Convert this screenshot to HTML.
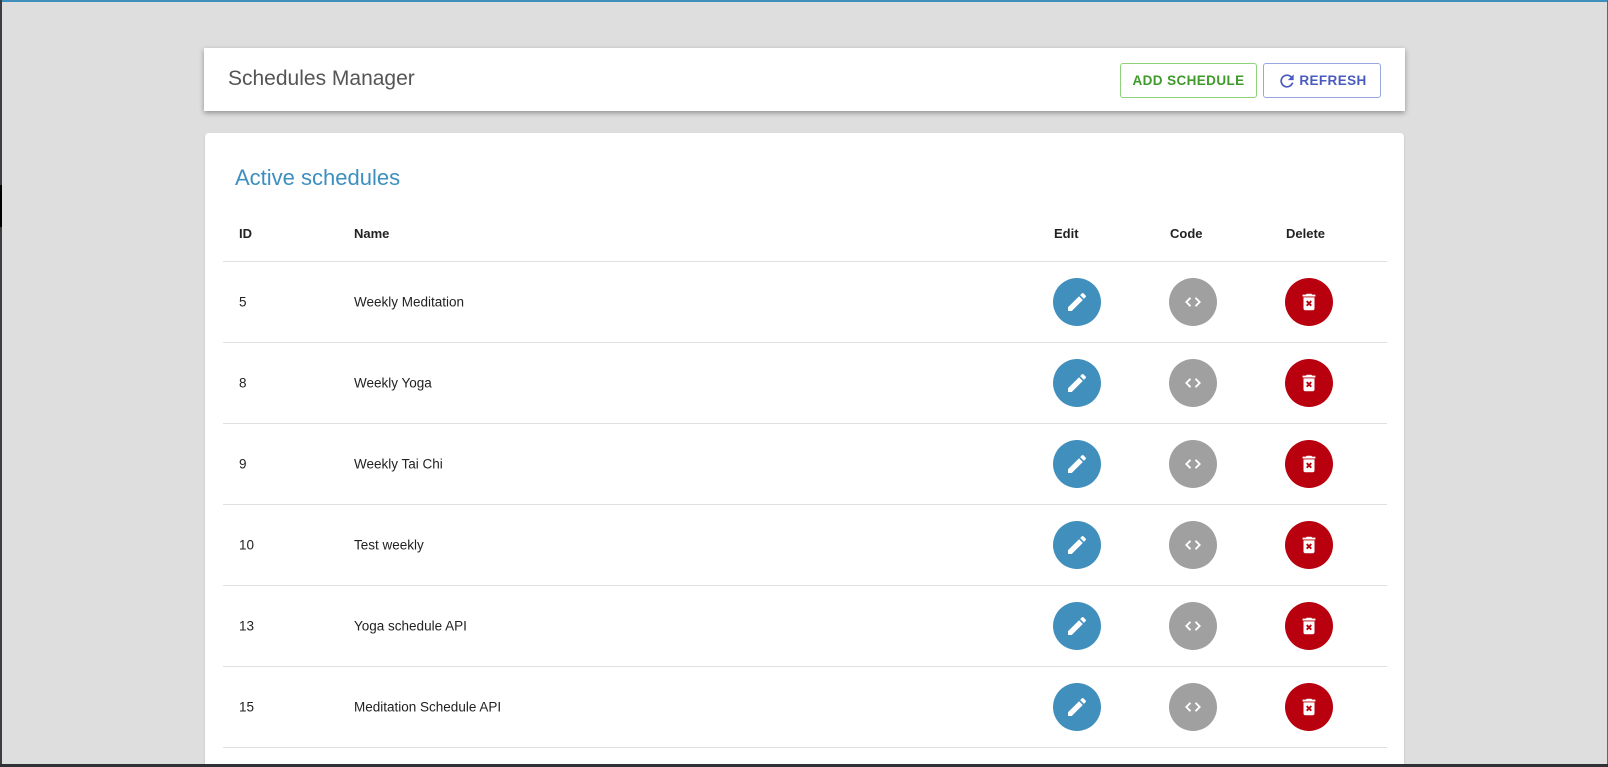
<!DOCTYPE html>
<html><head><meta charset="utf-8"><style>
*{box-sizing:border-box;margin:0;padding:0}
html,body{width:1608px;height:767px;overflow:hidden}
body{background:#dedede;font-family:"Liberation Sans",sans-serif;position:relative;color:#222}
.tb{position:absolute;left:0;top:0;width:1608px;height:2px;background:#3f8fbd}
.lb{position:absolute;left:0;top:0;width:2px;height:767px;background:#3a3d42}
.lb2{position:absolute;left:0;top:185px;width:2px;height:42px;background:#000}
.bb{position:absolute;left:0;top:764px;width:1608px;height:3px;background:#2e3236}
.rb{position:absolute;right:0;top:0;width:1px;height:767px;background:#666}
.hdr{position:absolute;left:204px;top:48px;width:1201px;height:63px;background:#fff;box-shadow:0 2px 5px rgba(0,0,0,.35)}
.hdr h1{position:absolute;left:24px;top:19px;font-size:21px;font-weight:normal;color:#555}
.btn{position:absolute;top:15px;height:35px;border:1px solid;border-radius:3px;font-size:13.5px;font-weight:bold;letter-spacing:.4px;display:flex;align-items:center;justify-content:center;background:#fff}
.add{left:916px;width:137px;border-color:#8fd27a;color:#3f9a2b}
.ref{left:1059px;width:118px;border-color:#9aa6e0;color:#4a5bbf;gap:2px}
.card{position:absolute;left:205px;top:133px;width:1199px;height:640px;background:#fff;border-radius:4px;box-shadow:0 1px 2px rgba(0,0,0,.15)}
.card h2{position:absolute;left:30px;top:32px;font-size:22px;font-weight:normal;color:#3d8fc0}
.t{position:absolute;left:18px;width:1164px}
.th{top:88px;height:41px;border-bottom:1px solid #e0e0e0;font-size:13px;font-weight:bold}
.th span{position:absolute;top:5px}
.row{height:81px;border-bottom:1px solid #e0e0e0;font-size:13.5px;position:relative}
.c{position:absolute;top:50%;transform:translateY(-50%)}
.circ{position:absolute;top:50%;margin-top:-24px;width:48px;height:48px;border-radius:50%;display:flex;align-items:center;justify-content:center}
.e{left:830px;background:#418fbd}.k{left:946px;background:#a0a0a0}.d{left:1062px;background:#b8000e}
</style></head><body>
<div class="tb"></div><div class="lb"></div><div class="lb2"></div><div class="rb"></div>
<div class="hdr"><h1>Schedules Manager</h1>
<div class="btn add">ADD SCHEDULE</div>
<div class="btn ref"><svg width="20" height="20" viewBox="0 0 24 24"><path fill="#4a5bbf" d="M17.65 6.35A7.958 7.958 0 0 0 12 4a8 8 0 1 0 7.73 10h-2.08A6 6 0 1 1 12 6c1.66 0 3.14.69 4.22 1.78L13 11h7V4l-2.35 2.35z"/></svg>REFRESH</div>
</div>
<div class="card"><h2>Active schedules</h2>
<div class="t th">
<span style="left:16px">ID</span><span style="left:131px">Name</span>
<span style="left:831px">Edit</span><span style="left:947px">Code</span><span style="left:1063px">Delete</span>
</div>
<div class="t" style="top:129px">
<div class="row"><span class="c" style="left:16px">5</span><span class="c" style="left:131px">Weekly Meditation</span><div class="circ e"><svg width="24" height="24" viewBox="0 0 24 24"><path fill="#fff" d="M3 17.25V21h3.75L17.81 9.94l-3.75-3.75L3 17.25zM20.71 7.04a1 1 0 0 0 0-1.41l-2.34-2.34a1 1 0 0 0-1.41 0l-1.83 1.83 3.75 3.75 1.83-1.83z"/></svg></div><div class="circ k"><svg width="20" height="20" viewBox="0 0 24 24"><path fill="none" stroke="#fff" stroke-width="2.2" d="M9 7l-5 5 5 5M15 7l5 5-5 5"/></svg></div><div class="circ d"><svg width="22" height="22" viewBox="0 0 24 24"><path fill="#fff" d="M6 19a2 2 0 0 0 2 2h8a2 2 0 0 0 2-2V7H6v12zM19 4h-3.5l-1-1h-5l-1 1H5v2h14V4z"/><path stroke="#b8000e" stroke-width="2" d="M9.5 11l5 5M14.5 11l-5 5"/></svg></div></div>
<div class="row"><span class="c" style="left:16px">8</span><span class="c" style="left:131px">Weekly Yoga</span><div class="circ e"><svg width="24" height="24" viewBox="0 0 24 24"><path fill="#fff" d="M3 17.25V21h3.75L17.81 9.94l-3.75-3.75L3 17.25zM20.71 7.04a1 1 0 0 0 0-1.41l-2.34-2.34a1 1 0 0 0-1.41 0l-1.83 1.83 3.75 3.75 1.83-1.83z"/></svg></div><div class="circ k"><svg width="20" height="20" viewBox="0 0 24 24"><path fill="none" stroke="#fff" stroke-width="2.2" d="M9 7l-5 5 5 5M15 7l5 5-5 5"/></svg></div><div class="circ d"><svg width="22" height="22" viewBox="0 0 24 24"><path fill="#fff" d="M6 19a2 2 0 0 0 2 2h8a2 2 0 0 0 2-2V7H6v12zM19 4h-3.5l-1-1h-5l-1 1H5v2h14V4z"/><path stroke="#b8000e" stroke-width="2" d="M9.5 11l5 5M14.5 11l-5 5"/></svg></div></div>
<div class="row"><span class="c" style="left:16px">9</span><span class="c" style="left:131px">Weekly Tai Chi</span><div class="circ e"><svg width="24" height="24" viewBox="0 0 24 24"><path fill="#fff" d="M3 17.25V21h3.75L17.81 9.94l-3.75-3.75L3 17.25zM20.71 7.04a1 1 0 0 0 0-1.41l-2.34-2.34a1 1 0 0 0-1.41 0l-1.83 1.83 3.75 3.75 1.83-1.83z"/></svg></div><div class="circ k"><svg width="20" height="20" viewBox="0 0 24 24"><path fill="none" stroke="#fff" stroke-width="2.2" d="M9 7l-5 5 5 5M15 7l5 5-5 5"/></svg></div><div class="circ d"><svg width="22" height="22" viewBox="0 0 24 24"><path fill="#fff" d="M6 19a2 2 0 0 0 2 2h8a2 2 0 0 0 2-2V7H6v12zM19 4h-3.5l-1-1h-5l-1 1H5v2h14V4z"/><path stroke="#b8000e" stroke-width="2" d="M9.5 11l5 5M14.5 11l-5 5"/></svg></div></div>
<div class="row"><span class="c" style="left:16px">10</span><span class="c" style="left:131px">Test weekly</span><div class="circ e"><svg width="24" height="24" viewBox="0 0 24 24"><path fill="#fff" d="M3 17.25V21h3.75L17.81 9.94l-3.75-3.75L3 17.25zM20.71 7.04a1 1 0 0 0 0-1.41l-2.34-2.34a1 1 0 0 0-1.41 0l-1.83 1.83 3.75 3.75 1.83-1.83z"/></svg></div><div class="circ k"><svg width="20" height="20" viewBox="0 0 24 24"><path fill="none" stroke="#fff" stroke-width="2.2" d="M9 7l-5 5 5 5M15 7l5 5-5 5"/></svg></div><div class="circ d"><svg width="22" height="22" viewBox="0 0 24 24"><path fill="#fff" d="M6 19a2 2 0 0 0 2 2h8a2 2 0 0 0 2-2V7H6v12zM19 4h-3.5l-1-1h-5l-1 1H5v2h14V4z"/><path stroke="#b8000e" stroke-width="2" d="M9.5 11l5 5M14.5 11l-5 5"/></svg></div></div>
<div class="row"><span class="c" style="left:16px">13</span><span class="c" style="left:131px">Yoga schedule API</span><div class="circ e"><svg width="24" height="24" viewBox="0 0 24 24"><path fill="#fff" d="M3 17.25V21h3.75L17.81 9.94l-3.75-3.75L3 17.25zM20.71 7.04a1 1 0 0 0 0-1.41l-2.34-2.34a1 1 0 0 0-1.41 0l-1.83 1.83 3.75 3.75 1.83-1.83z"/></svg></div><div class="circ k"><svg width="20" height="20" viewBox="0 0 24 24"><path fill="none" stroke="#fff" stroke-width="2.2" d="M9 7l-5 5 5 5M15 7l5 5-5 5"/></svg></div><div class="circ d"><svg width="22" height="22" viewBox="0 0 24 24"><path fill="#fff" d="M6 19a2 2 0 0 0 2 2h8a2 2 0 0 0 2-2V7H6v12zM19 4h-3.5l-1-1h-5l-1 1H5v2h14V4z"/><path stroke="#b8000e" stroke-width="2" d="M9.5 11l5 5M14.5 11l-5 5"/></svg></div></div>
<div class="row"><span class="c" style="left:16px">15</span><span class="c" style="left:131px">Meditation Schedule API</span><div class="circ e"><svg width="24" height="24" viewBox="0 0 24 24"><path fill="#fff" d="M3 17.25V21h3.75L17.81 9.94l-3.75-3.75L3 17.25zM20.71 7.04a1 1 0 0 0 0-1.41l-2.34-2.34a1 1 0 0 0-1.41 0l-1.83 1.83 3.75 3.75 1.83-1.83z"/></svg></div><div class="circ k"><svg width="20" height="20" viewBox="0 0 24 24"><path fill="none" stroke="#fff" stroke-width="2.2" d="M9 7l-5 5 5 5M15 7l5 5-5 5"/></svg></div><div class="circ d"><svg width="22" height="22" viewBox="0 0 24 24"><path fill="#fff" d="M6 19a2 2 0 0 0 2 2h8a2 2 0 0 0 2-2V7H6v12zM19 4h-3.5l-1-1h-5l-1 1H5v2h14V4z"/><path stroke="#b8000e" stroke-width="2" d="M9.5 11l5 5M14.5 11l-5 5"/></svg></div></div>
</div>
</div>
<div class="bb"></div>
</body></html>
